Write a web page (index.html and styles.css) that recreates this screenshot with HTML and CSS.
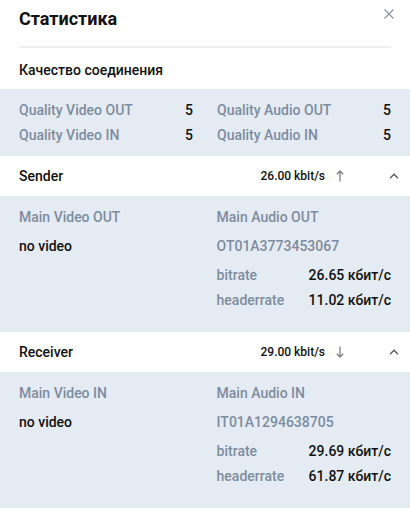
FILE: index.html
```html
<!DOCTYPE html>
<html lang="ru">
<head>
  <meta charset="UTF-8" />
  <meta name="viewport" content="width=device-width, initial-scale=1.0">
  <title>Статистика</title>
  <link rel="stylesheet" href="styles.css">
</head>
<body>
  <div class="stats">
    <div class="stats-head">
      <h2>Статистика</h2>
      <button class="close" aria-label="Закрыть">
        <svg width="10" height="10" viewBox="0 0 10 10"><path d="M0.5 0.5 L9.5 9.5 M9.5 0.5 L0.5 9.5" stroke="currentColor" stroke-width="1.2" fill="none"/></svg>
      </button>
    </div>

    <div class="section-title">Качество соединения</div>
    <div class="quality">
      <div class="q-row"><span class="lbl">Quality Video OUT</span><span class="val">5</span></div>
      <div class="q-row"><span class="lbl">Quality Audio OUT</span><span class="val">5</span></div>
      <div class="q-row"><span class="lbl">Quality Video IN</span><span class="val">5</span></div>
      <div class="q-row"><span class="lbl">Quality Audio IN</span><span class="val">5</span></div>
    </div>

    <!-- исходящий поток -->
    <div class="panel-head">
      <span class="panel-name">Sender</span>
      <span class="rate">26.00 kbit/s</span>
      <svg class="dir" width="8" height="12" viewBox="0 0 8 12"><path d="M4 11.5 V1 M0.8 4.2 L4 1 L7.2 4.2" stroke="currentColor" stroke-width="1.3" fill="none"/></svg>
      <svg class="toggle" width="10" height="6" viewBox="0 0 10 6"><path d="M1 5.3 L5 1.3 L9 5.3" stroke="currentColor" stroke-width="1.4" fill="none"/></svg>
    </div>
    <div class="panel-body">
      <div class="col">
        <div class="lbl">Main Video OUT</div>
        <div class="big">no video</div>
      </div>
      <div class="col">
        <div class="lbl">Main Audio OUT</div>
        <div class="stream-id">OT01A3773453067</div>
        <div class="kv">
          <span class="key">bitrate</span><span class="big">26.65 кбит/с</span>
          <span class="key">headerrate</span><span class="big">11.02 кбит/с</span>
        </div>
      </div>
    </div>

    <!-- входящий поток -->
    <div class="panel-head">
      <span class="panel-name">Receiver</span>
      <span class="rate">29.00 kbit/s</span>
      <svg class="dir" width="8" height="12" viewBox="0 0 8 12"><path d="M4 0.5 V11 M0.8 7.8 L4 11 L7.2 7.8" stroke="currentColor" stroke-width="1.3" fill="none"/></svg>
      <svg class="toggle" width="10" height="6" viewBox="0 0 10 6"><path d="M1 5.3 L5 1.3 L9 5.3" stroke="currentColor" stroke-width="1.4" fill="none"/></svg>
    </div>
    <div class="panel-body">
      <div class="col">
        <div class="lbl">Main Video IN</div>
        <div class="big">no video</div>
      </div>
      <div class="col">
        <div class="lbl">Main Audio IN</div>
        <div class="stream-id">IT01A1294638705</div>
        <div class="kv">
          <span class="key">bitrate</span><span class="big">29.69 кбит/с</span>
          <span class="key">headerrate</span><span class="big">61.87 кбит/с</span>
        </div>
      </div>
    </div>
  </div>
</body>
</html>
```

FILE: styles.css
```css
body {
  margin: 0;
  background: #fff;
  font-family: Roboto, "Liberation Sans", sans-serif;
  color: #111;
}
.stats {
  width: 410px;
}
.stats-head {
  margin: 0 19px;
  height: 46px;
  border-bottom: 2px solid #eef0f3;
  display: flex;
  justify-content: space-between;
  align-items: flex-start;
}
.stats-head h2 {
  margin: 7px 0 0;
  font-size: 18px;
  line-height: 24px;
  font-weight: 700;
}
.close {
  border: none;
  background: none;
  padding: 0;
  margin: 7px -3px 0 0;
  color: #8c96a3;
  cursor: pointer;
}
.section-title {
  padding: 12px 19px 9px;
  font-size: 14px;
  line-height: 20px;
  font-weight: 500;
}
.quality {
  background: #e5ebf3;
  padding: 9px 19px 8px;
  display: grid;
  grid-template-columns: 1fr 1fr;
  column-gap: 24px;
}
.q-row {
  display: flex;
  justify-content: space-between;
  font-size: 14px;
  line-height: 25px;
}
.lbl {
  color: #7d8ca0;
  font-weight: 500;
}
.val {
  font-weight: 500;
}
.panel-head {
  height: 40px;
  padding: 0 11px 0 19px;
  display: flex;
  align-items: center;
  font-size: 14px;
}
.panel-name {
  font-weight: 500;
  flex: 1;
}
.rate {
  font-size: 12px;
  font-weight: 500;
}
.dir {
  margin-left: 11px;
  color: #7b7f85;
}
.toggle {
  margin-left: 45px;
  color: #555a60;
}
.panel-body {
  background: #e5ebf3;
  padding: 10px 19px 19px;
  display: grid;
  grid-template-columns: 1fr 1fr;
  column-gap: 24px;
  font-size: 14px;
  line-height: 22px;
}
.big {
  font-weight: 500;
  white-space: nowrap;
}
.col .big,
.stream-id {
  margin-top: 7px;
}
.stream-id {
  color: #7d8ca0;
  font-weight: 500;
}
.kv {
  margin-top: 6px;
  display: grid;
  grid-template-columns: 92px max-content;
  line-height: 25px;
}
.key {
  color: #7d8ca0;
  font-weight: 500;
}
.kv .big {
  margin-top: 0;
}
```
